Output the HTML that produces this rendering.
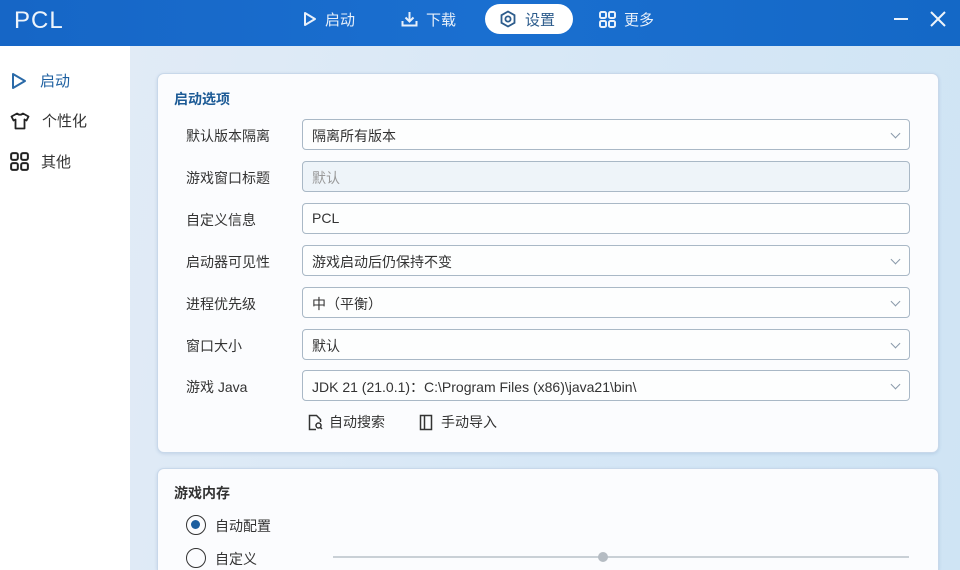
<!DOCTYPE html><html style="width:960px;height:570px;overflow:hidden"><head><meta charset="utf-8"><style>
*{margin:0;padding:0;box-sizing:border-box}
body{width:960px;height:570px;overflow:hidden;font-family:"Liberation Sans","Noto Sans CJK SC",sans-serif;background:linear-gradient(100deg,#e4ecf6,#d6e7f6 60%,#cfe4f4);position:relative;color:#333}
.hdr{position:absolute;left:0;top:0;width:960px;height:46px;background:linear-gradient(90deg,#1666c6,#1a6fd0 50%,#1468c6);color:#fff}
.logo{position:absolute;left:14px;top:7px;font-size:24px;letter-spacing:1px;color:#eef4fb}
.nav{position:absolute;top:4px;height:30px;display:flex;align-items:center;font-size:15px;color:#e8f0fa}
.nav svg{margin-right:8px}
.side{position:absolute;left:0;top:46px;width:130px;height:524px;background:#fff}
.si{position:absolute;left:10px;display:flex;align-items:center;font-size:15px;color:#333}
.si svg{margin-right:12px}
.card{position:absolute;left:157px;width:782px;background:#fbfcfe;border:1px solid #c8d8ea;border-radius:7px;box-shadow:0 1px 3px rgba(80,120,170,.2)}
.title{position:absolute;left:16px;font-size:14px;font-weight:bold}
.lab{position:absolute;left:186px;font-size:14px;color:#333}
.inp{position:absolute;left:302px;width:608px;height:31px;border:1px solid #a9b8c6;border-radius:4px;background:#fdfefe;font-size:14px;padding:6px 9px;color:#333}
.inp.dd:after{content:"";position:absolute;right:10px;top:10px;width:6px;height:6px;border-right:1.3px solid #8a9aaa;border-bottom:1.3px solid #8a9aaa;transform:rotate(45deg)}
</style></head><body>
<div class="hdr">
<div class="logo">PCL</div>
<div class="nav" style="left:303px"><svg width="14" height="16" viewBox="0 0 14 16"><path d="M2 2L12 8L2 14Z" fill="none" stroke="#e8f0fa" stroke-width="2" stroke-linejoin="round"/></svg>启动</div>
<div class="nav" style="left:401px"><svg width="17" height="16" viewBox="0 0 17 16"><path d="M8.5 1V10M4.5 6.5L8.5 10.5L12.5 6.5M1.5 10V14.5H15.5V10" fill="none" stroke="#e8f0fa" stroke-width="2"/></svg>下载</div>
<div style="position:absolute;left:485px;top:4px;width:88px;height:30px;border-radius:15px;background:#fff"></div>
<div class="nav" style="left:499px;color:#2d5c8c"><svg width="18" height="18" viewBox="0 0 18 18"><path d="M9 1.5L15.5 5.2V12.8L9 16.5L2.5 12.8V5.2Z" fill="none" stroke="#2d5c8c" stroke-width="1.8"/><circle cx="9" cy="9" r="2.6" fill="none" stroke="#2d5c8c" stroke-width="1.8"/></svg>设置</div>
<div class="nav" style="left:599px"><svg width="17" height="17" viewBox="0 0 17 17" fill="none" stroke="#e8f0fa" stroke-width="2"><rect x="1" y="1" width="6" height="6" rx="1.5"/><rect x="10" y="1" width="6" height="6" rx="1.5"/><rect x="1" y="10" width="6" height="6" rx="1.5"/><rect x="10" y="10" width="6" height="6" rx="1.5"/></svg>更多</div>
<div style="position:absolute;left:894px;top:18px;width:14px;height:2px;background:#eef4fb"></div>
<svg style="position:absolute;left:930px;top:11px" width="16" height="16" viewBox="0 0 16 16"><path d="M1 1L15 15M15 1L1 15" stroke="#eef4fb" stroke-width="2"/></svg>
</div>
<div class="side">
<div class="si" style="top:24px;color:#1d5fa0"><svg width="18" height="18" viewBox="0 0 18 18"><path d="M3 2L15 9L3 16Z" fill="none" stroke="#2a6aa8" stroke-width="2" stroke-linejoin="round"/></svg>启动</div>
<div class="si" style="top:64px"><svg width="20" height="18" viewBox="0 0 20 18"><path d="M7 1.5Q10 4 13 1.5L18.5 4.5L16.5 8.5L14.5 7.5V16.5H5.5V7.5L3.5 8.5L1.5 4.5Z" fill="none" stroke="#222" stroke-width="1.8" stroke-linejoin="round"/></svg>个性化</div>
<div class="si" style="top:105px"><svg width="19" height="19" viewBox="0 0 17 17" fill="none" stroke="#222" stroke-width="1.8"><rect x="1" y="1" width="6" height="6" rx="1.5"/><rect x="10" y="1" width="6" height="6" rx="1.5"/><rect x="1" y="10" width="6" height="6" rx="1.5"/><rect x="10" y="10" width="6" height="6" rx="1.5"/></svg>其他</div>
</div>
<div class="card" style="top:73px;height:380px"><div class="title" style="top:15px;color:#1d5b96">启动选项</div></div>
<div class="card" style="top:468px;height:102px;border-bottom:none;border-radius:7px 7px 0 0"><div class="title" style="top:14px;color:#333">游戏内存</div></div>
<div class="lab" style="top:126px">默认版本隔离</div><div class="inp dd" style="top:119px">隔离所有版本</div>
<div class="lab" style="top:168px">游戏窗口标题</div><div class="inp" style="top:161px;background:#eef4f9;color:#999">默认</div>
<div class="lab" style="top:210px">自定义信息</div><div class="inp" style="top:203px">PCL</div>
<div class="lab" style="top:252px">启动器可见性</div><div class="inp dd" style="top:245px">游戏启动后仍保持不变</div>
<div class="lab" style="top:294px">进程优先级</div><div class="inp dd" style="top:287px">中（平衡）</div>
<div class="lab" style="top:336px">窗口大小</div><div class="inp dd" style="top:329px">默认</div>
<div class="lab" style="top:377px">游戏 Java</div><div class="inp dd" style="top:370px">JDK 21 (21.0.1)：C:\Program Files (x86)\java21\bin\</div>
<div style="position:absolute;left:308px;top:412px;font-size:14px;display:flex;align-items:center"><svg width="15" height="17" viewBox="0 0 15 17" fill="none" stroke="#333" stroke-width="1.5"><path d="M8 15.5H1.5V1.5H8.5L12.5 5.5V8"/><circle cx="10.5" cy="11.5" r="2.5"/><path d="M12.3 13.3L14 15"/></svg><span style="margin-left:6px">自动搜索</span></div>
<div style="position:absolute;left:419px;top:412px;font-size:14px;display:flex;align-items:center"><svg width="14" height="17" viewBox="0 0 14 17" fill="none" stroke="#333" stroke-width="1.5"><path d="M1.5 1.5H12.5V15.5H1.5Z M5.5 1.5V15.5"/></svg><span style="margin-left:8px">手动导入</span></div>
<div style="position:absolute;left:186px;top:515px;width:20px;height:20px;border:1.5px solid #333;border-radius:50%"><div style="position:absolute;left:4px;top:4px;width:9px;height:9px;border-radius:50%;background:#1d5fa0"></div></div>
<div style="position:absolute;left:215px;top:516px;font-size:14px">自动配置</div>
<div style="position:absolute;left:186px;top:548px;width:20px;height:20px;border:1.5px solid #333;border-radius:50%"></div>
<div style="position:absolute;left:215px;top:549px;font-size:14px">自定义</div>
<div style="position:absolute;left:333px;top:556px;width:576px;height:2px;background:#c9d0d6"></div>
<div style="position:absolute;left:598px;top:552px;width:10px;height:10px;border-radius:50%;background:#b5bcc3"></div>
</body></html>
